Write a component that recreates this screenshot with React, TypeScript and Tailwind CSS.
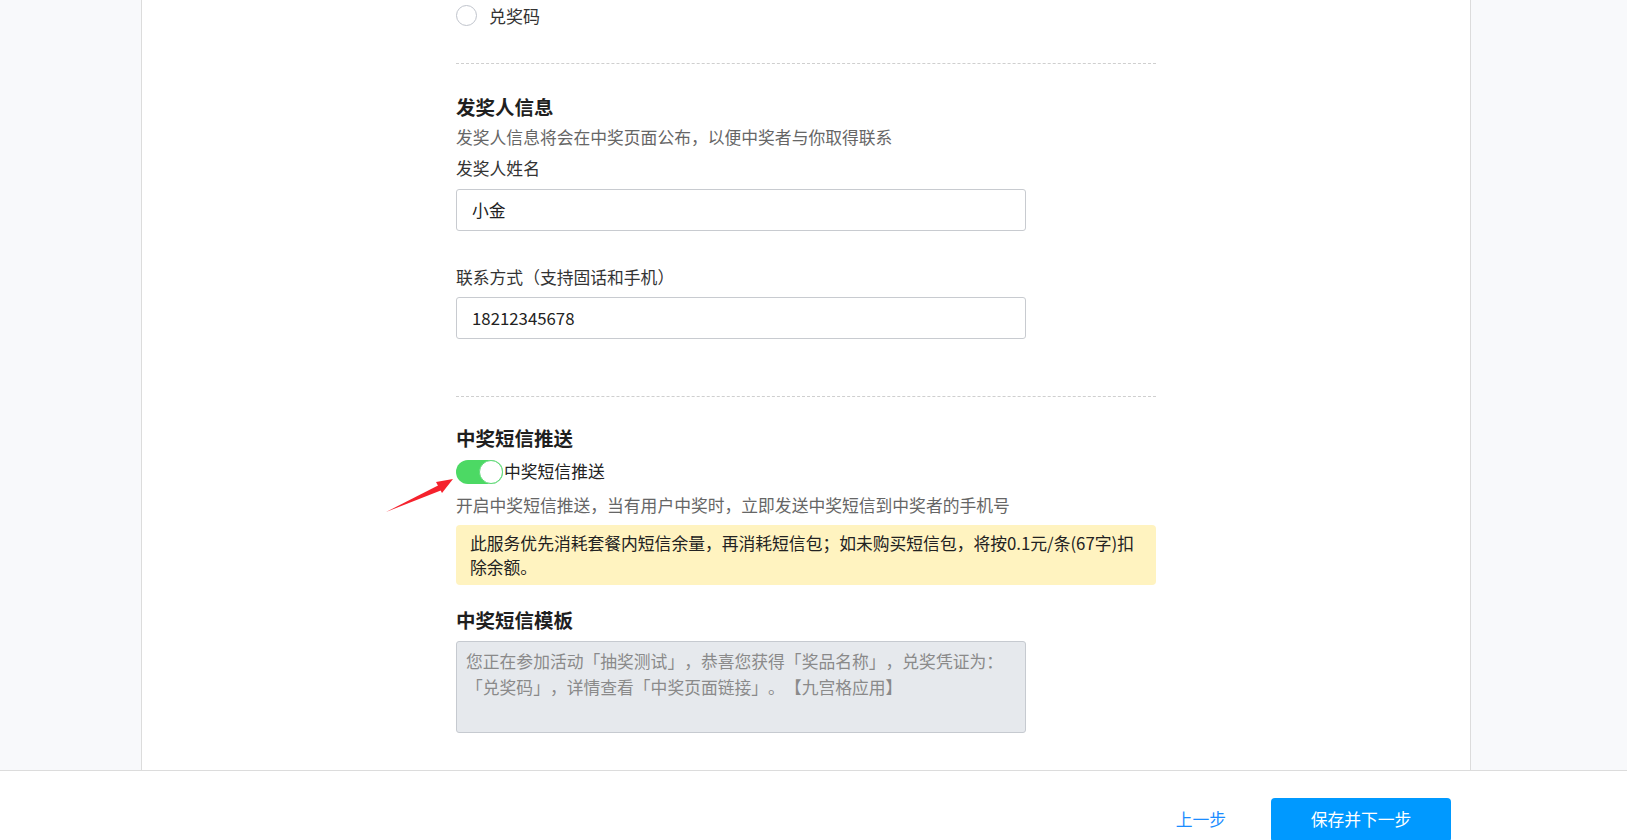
import { useState } from "react";

function Radio({ label }: { label: string }) {
  return (
    <label className="flex h-[21px] items-center gap-[12px] text-[17px] text-[#333]">
      <span className="h-[21px] w-[21px] rounded-full border border-[#c0c4cc] bg-white" />
      {label}
    </label>
  );
}

function Switch({ on, onChange }: { on: boolean; onChange: () => void }) {
  return (
    <button
      type="button"
      onClick={onChange}
      className={`flex h-[24px] w-[47px] items-center rounded-full p-0 ${on ? "justify-end bg-[#4cd964]" : "justify-start bg-[#e5e5e5]"}`}
    >
      <span className="h-[24px] w-[24px] rounded-full border border-[#62d97a] bg-white" />
    </button>
  );
}

function Arrow() {
  // red annotation arrow pointing at the switch
  return (
    <svg className="absolute left-[380px] top-[470px]" width="80" height="50" viewBox="0 0 80 50">
      <polygon points="6,42 59,15 62,20" fill="#f5222d" />
      <polygon points="73,9 56,12 62,23" fill="#f5222d" />
    </svg>
  );
}

export default function App() {
  const [smsOn, setSmsOn] = useState(true);
  const [name, setName] = useState("小金");
  const [phone, setPhone] = useState("18212345678");

  return (
    <div className="relative h-[840px] w-full overflow-hidden bg-white font-['Noto_Sans_CJK_SC',sans-serif] text-[#333] [text-spacing-trim:space-all]">
      <div className="flex h-[771px] border-b border-[#dcdcdc]">
        <div className="w-[142px] shrink-0 border-r border-[#dcdcdc] bg-[#f8f9fb]" />
        <div className="flex-1 bg-white pl-[314px]">
          <div className="w-[700px] pt-[5px]">
            <Radio label="兑奖码" />
            <div className="mt-[37px] border-t border-dashed border-[#cfcfcf]" />

            <h2 className="mt-[27px] text-[19.5px] font-bold leading-[31px] text-[#1f1f1f]">发奖人信息</h2>
            <p className="text-[16.8px] leading-[31px] text-[#666]">发奖人信息将会在中奖页面公布，以便中奖者与你取得联系</p>
            <div className="text-[16.8px] leading-[31px] text-[#333]">发奖人姓名</div>
            <input
              value={name}
              onChange={(e) => setName(e.target.value)}
              className="mt-[5px] h-[42px] w-[570px] rounded-[3px] border border-[#c8cbd0] px-[15px] text-[16.8px] text-[#222] outline-none"
            />
            <div className="mt-[31px] text-[16.8px] leading-[31px] text-[#333]">联系方式（支持固话和手机）</div>
            <input
              value={phone}
              onChange={(e) => setPhone(e.target.value)}
              className="mt-[4px] h-[42px] w-[570px] rounded-[3px] border border-[#c8cbd0] px-[15px] text-[16.8px] text-[#222] outline-none"
            />
            <div className="mt-[57px] border-t border-dashed border-[#cfcfcf]" />

            <h2 className="mt-[25px] text-[19.5px] font-bold leading-[31px] text-[#1f1f1f]">中奖短信推送</h2>
            <div className="mt-[3px] flex h-[31px] items-center">
              <Switch on={smsOn} onChange={() => setSmsOn(!smsOn)} />
              <span className="ml-[1px] text-[16.8px] text-[#222]">中奖短信推送</span>
            </div>
            <p className="mt-[3px] text-[16.8px] leading-[31px] text-[#666]">开启中奖短信推送，当有用户中奖时，立即发送中奖短信到中奖者的手机号</p>
            <div className="mt-[4px] rounded-[4px] bg-[#fff3c0] px-[14px] py-[6px] text-[16.8px] leading-[24px] text-[#222]">
              此服务优先消耗套餐内短信余量，再消耗短信包；如未购买短信包，将按0.1元/条(67字)扣除余额。
            </div>

            <h2 className="mt-[19px] text-[19.5px] font-bold leading-[31px] text-[#1f1f1f]">中奖短信模板</h2>
            <textarea
              readOnly
              value="您正在参加活动「抽奖测试」，恭喜您获得「奖品名称」，兑奖凭证为：「兑奖码」，详情查看「中奖页面链接」。【九宫格应用】"
              className="mt-[6px] block h-[92px] w-[570px] resize-none rounded-[3px] border border-[#c6cad0] bg-[#e6e9ed] px-[9px] pt-[6px] text-[16.8px] leading-[26px] text-[#8a8a8a] outline-none [text-spacing-trim:space-all]"
            />
          </div>
        </div>
        <div className="w-[157px] shrink-0 border-l border-[#dcdcdc] bg-[#f8f9fb]" />
      </div>

      <div className="flex justify-end pr-[176px] pt-[27px]">
        <button className="mr-[45px] h-[44px] text-[16.8px] text-[#1a8cff]">上一步</button>
        <button className="h-[44px] w-[180px] rounded-[4px] bg-[#0099ff] text-[16.8px] text-white">保存并下一步</button>
      </div>

      <Arrow />
    </div>
  );
}
